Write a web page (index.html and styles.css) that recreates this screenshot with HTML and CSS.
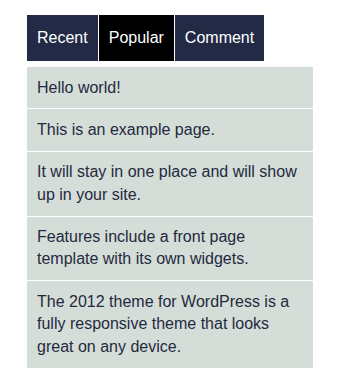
FILE: index.html
```html
<!DOCTYPE html>
<html lang="en">
<head>
  <meta charset="UTF-8">
  <meta name="viewport" content="width=device-width, initial-scale=1.0">
  <title>Tabs widget</title>
  <link rel="stylesheet" href="styles.css">
</head>
<body>
  <div class="widget">
    <ul class="tabs">
      <li><a href="#">Recent</a></li>
      <li class="active"><a href="#">Popular</a></li>
      <li><a href="#">Comment</a></li>
    </ul>

    <ul class="posts">
      <li>Hello world!</li>
      <li>This is an example page.</li>
      <li>It will stay in one place and will show up in your site.</li>
      <li>Features include a front page template with its own widgets.</li>
      <li>The 2012 theme for WordPress is a fully responsive theme that looks great on any device.</li>
    </ul>
  </div>
</body>
</html>
```

FILE: styles.css
```css
body {
  margin: 0;
  padding: 15px 0 0 27px;
  font-family: "Liberation Sans", Arial, sans-serif;
  font-size: 16px;
  background: #fff;
}

.widget {
  width: 286px;
}

.tabs {
  display: flex;
  gap: 1px;
  list-style: none;
  margin: 0 0 6px;
  padding: 0;
}

.tabs a {
  display: block;
  height: 46px;
  line-height: 46px;
  padding: 0 10px;
  background-color: #222a45;
  color: #fff;
  text-decoration: none;
}

.tabs .active a {
  background-color: #000;
}

.posts {
  list-style: none;
  margin: 0;
  padding: 0;
  background-color: #d5ddd9;
}

.posts li {
  padding: 9.5px 10px;
  line-height: 1.4;
  color: #242a3d;
  border-bottom: 1px solid #fff;
}

.posts li:last-child {
  border-bottom: none;
}
```
